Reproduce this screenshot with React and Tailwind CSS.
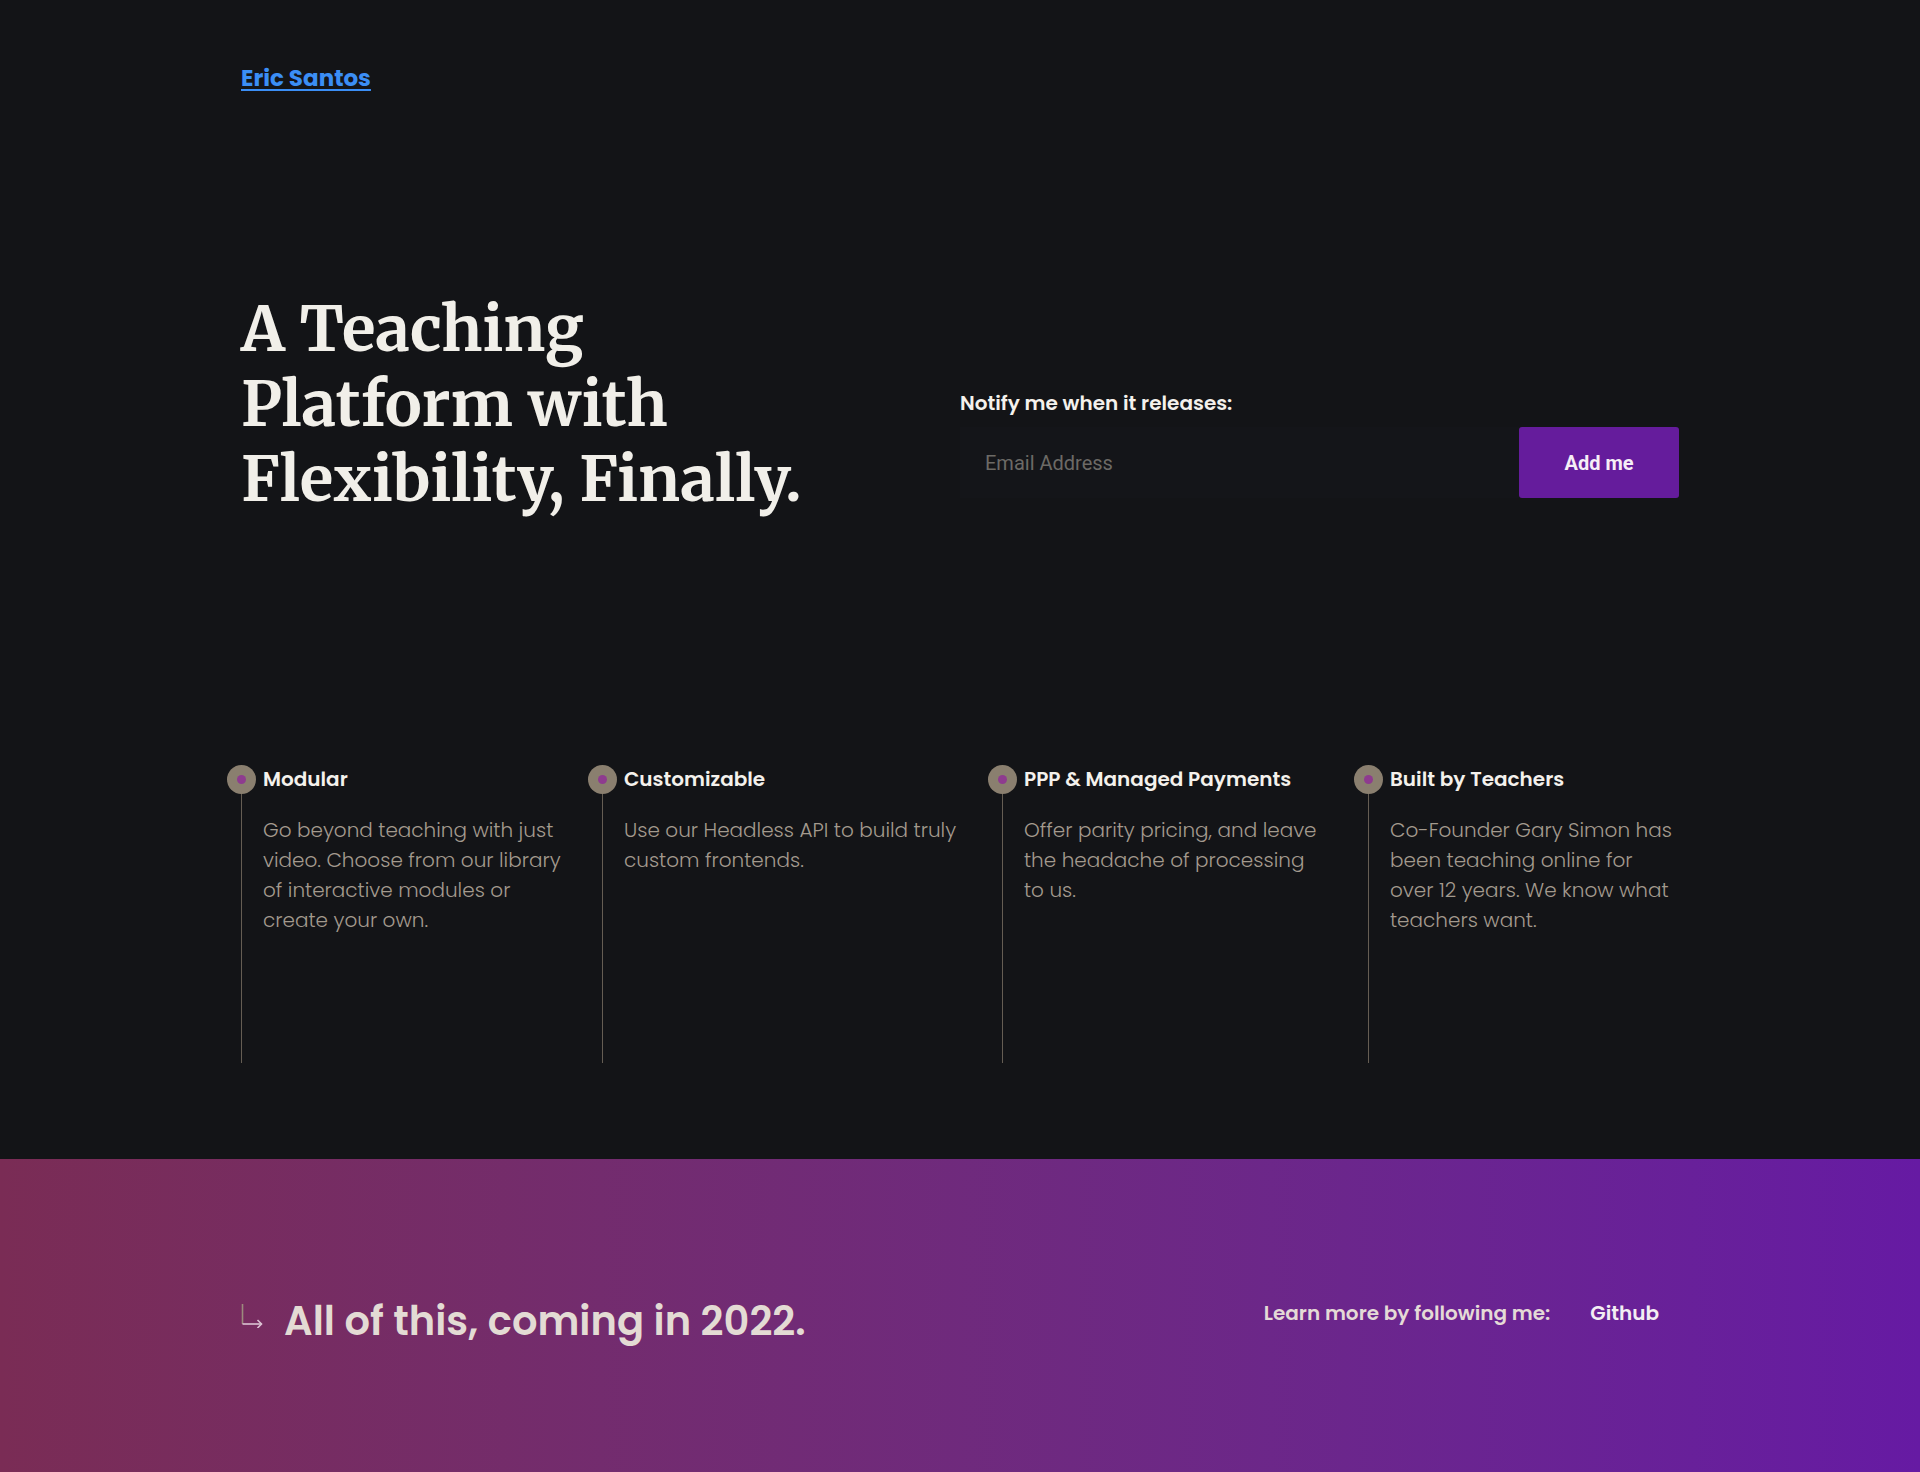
import React from "react";

const features = [
  {
    title: "Modular",
    width: "w-[361px]",
    lines: ["Go beyond teaching with just", "video. Choose from our library", "of interactive modules or", "create your own."],
  },
  {
    title: "Customizable",
    width: "w-[400px]",
    lines: ["Use our Headless API to build truly", "custom frontends."],
  },
  {
    title: "PPP & Managed Payments",
    width: "w-[366px]",
    lines: ["Offer parity pricing, and leave", "the headache of processing", "to us."],
  },
  {
    title: "Built by Teachers",
    width: "w-[310px]",
    lines: ["Co-Founder Gary Simon has", "been teaching online for", "over 12 years. We know what", "teachers want."],
  },
];

function Feature({ title, width, lines }) {
  return (
    <div className={`relative h-[298px] border-l border-[#655d53] pl-[21px] ${width}`}>
      <span className="absolute -left-[15px] top-0 flex h-[29px] w-[29px] items-center justify-center rounded-full bg-[#8a7f6f]">
        <span className="h-[9px] w-[9px] rounded-full bg-[#8e3b8f]"></span>
      </span>
      <h3 className="text-[20px] font-semibold leading-[29px] text-[#f4f1ec]">{title}</h3>
      <p className="mt-[21px] text-[20px] font-light leading-[30px] text-[#a39a8e]">
        {lines.map((line, i) => (
          <span key={i} className="block whitespace-nowrap">
            {line}
          </span>
        ))}
      </p>
    </div>
  );
}

function ArrowIcon() {
  return (
    <svg width="24" height="26" viewBox="0 0 24 26" fill="none" aria-hidden="true" className="mb-[12px]">
      <path d="M1.5 2v20" stroke="#9c8a7c" strokeWidth="1.6" />
      <path d="M1.5 22h19" stroke="#dcc3d4" strokeWidth="1.6" />
      <path d="M16.5 18l4 4-4 4" stroke="#dcc3d4" strokeWidth="1.6" />
    </svg>
  );
}

export default function App() {
  return (
    <div className="min-h-screen bg-[#131417] font-['Poppins','Open_Sans',sans-serif]">
      <div className="mx-auto w-[1438px]">
        <header className="pt-[63px]">
          <a href="#" className="text-[23px] font-bold leading-[30px] text-[#3b8ef5] underline underline-offset-[3px]">
            Eric Santos
          </a>
        </header>

        <section className="mt-[199px] grid grid-cols-2 items-start">
          <h1 className="font-['Merriweather','DejaVu_Serif',serif] text-[62px] font-bold leading-[75px] text-[#f1efe9]">
            A Teaching
            <br />
            Platform with
            <br />
            Flexibility, Finally.
          </h1>

          <form className="mt-[96px]" onSubmit={(e) => e.preventDefault()}>
            <label className="block text-[20px] font-semibold leading-[30px] text-[#f4f1ec]">
              Notify me when it releases:
            </label>
            <div className="mt-[9px] flex h-[71px]">
              <input
                type="email"
                placeholder="Email Address"
                className="h-full flex-1 bg-[#141519] px-[25px] font-['Roboto',sans-serif] text-[20px] text-[#e8e4de] outline-none placeholder:text-[#6c6a66]"
              />
              <button
                type="submit"
                className="h-full w-[160px] rounded-[3px] bg-[#651c9c] font-['Roboto',sans-serif] text-[20px] font-bold text-[#f6eef6]"
              >
                Add me
              </button>
            </div>
          </form>
        </section>

        <section className="mt-[248px] flex">
          {features.map((f) => (
            <Feature key={f.title} {...f} />
          ))}
        </section>
      </div>

      <footer className="mt-[96px] h-[313px] bg-gradient-to-r from-[#7a2c55] to-[#661aa3]">
        <div className="mx-auto flex h-full w-[1438px] items-center justify-between">
          <div className="flex items-center gap-[19px] pt-[10px]">
            <ArrowIcon />
            <h2 className="text-[40px] font-semibold leading-[56px] text-[#e3dbd4]">
              All of this, coming in 2022.
            </h2>
          </div>
          <div className="flex items-center gap-[40px] pb-[5px] pr-[20px] text-[20px] font-semibold text-[#e4dad6]">
            <span>Learn more by following me:</span>
            <a href="#" className="text-[#f3edf3]">
              Github
            </a>
          </div>
        </div>
      </footer>
    </div>
  );
}
